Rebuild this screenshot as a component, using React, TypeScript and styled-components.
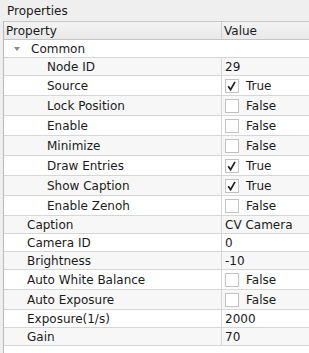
import React from "react";
import styled, { createGlobalStyle } from "styled-components";

const Global = createGlobalStyle`
  html, body { margin: 0; padding: 0; background: #efefef; }
  body { font-family: "DejaVu Sans", "Liberation Sans", sans-serif; font-size: 12px; color: #1a1a1a; }
`;

const Panel = styled.div`
  width: 309px;
  height: 353px;
  display: flex;
  flex-direction: column;
  overflow: hidden;
  background: #efefef;
`;

const TitleBar = styled.div`
  height: 21px;
  padding-left: 7px;
  display: flex;
  align-items: center;
  box-sizing: border-box;
  padding-top: 1px;
`;

const Frame = styled.div`
  flex: 1;
  margin-left: 3px;
  border-left: 1px solid #b9b9b9;
  border-top: 1px solid #c6c6c6;
  background: #ffffff;
  width: 340px;
  display: flex;
  flex-direction: column;
`;

const Header = styled.div`
  display: grid;
  grid-template-columns: 217px 1fr;
  height: 17px;
  border-bottom: 1px solid #c4c4c4;
  background: linear-gradient(#f3f3f3, #e9e9e9);
`;

const HeaderCell = styled.div<{ $divider?: boolean }>`
  display: flex;
  align-items: center;
  padding-left: ${(p) => (p.$divider ? "2px" : "2px")};
  border-left: ${(p) => (p.$divider ? "1px solid #cfcfcf" : "none")};
`;

const Row = styled.div<{ $alt: boolean; $tall: boolean }>`
  display: grid;
  grid-template-columns: 217px 1fr;
  height: ${(p) => (p.$tall ? 19 : 17)}px;
  border-bottom: 1px solid #d6d6d6;
  background: ${(p) => (p.$alt ? "#f7f7f7" : "#ffffff")};
`;

const GroupRow = styled.div`
  display: flex;
  align-items: center;
  height: 17px;
  border-bottom: 1px solid #d6d6d6;
  background: #ffffff;
`;

const Arrow = styled.span`
  width: 0;
  height: 0;
  margin-left: 10px;
  margin-right: 11px;
  border-left: 3.5px solid transparent;
  border-right: 3.5px solid transparent;
  border-top: 4px solid #8a8a8a;
  margin-top: 1px;
`;

const NameCell = styled.div<{ $level: number }>`
  display: flex;
  align-items: center;
  padding-left: ${(p) => 23 + p.$level * 20}px;
  white-space: nowrap;
`;

const ValueCell = styled.div`
  display: flex;
  align-items: center;
  border-left: 1px solid #d6d6d6;
  padding-left: 3px;
  white-space: nowrap;
`;

const Box = styled.span`
  width: 12px;
  height: 12px;
  border: 1px solid #c2c2c2;
  background: #ffffff;
  margin-right: 7px;
  display: inline-flex;
  align-items: center;
  justify-content: center;
  flex: none;
`;

const Check = () => (
  <svg width="12" height="12" viewBox="0 0 12 12">
    <path d="M2.2 6.2 L4.6 9.6 L9 1.8" fill="none" stroke="#202020" strokeWidth="1.7" strokeLinecap="butt" strokeLinejoin="miter" />
  </svg>
);

type Item = { name: string; level: number; value?: string; bool?: boolean };

const items: Item[] = [
  { name: "Node ID", level: 1, value: "29" },
  { name: "Source", level: 1, bool: true },
  { name: "Lock Position", level: 1, bool: false },
  { name: "Enable", level: 1, bool: false },
  { name: "Minimize", level: 1, bool: false },
  { name: "Draw Entries", level: 1, bool: true },
  { name: "Show Caption", level: 1, bool: true },
  { name: "Enable Zenoh", level: 1, bool: false },
  { name: "Caption", level: 0, value: "CV Camera" },
  { name: "Camera ID", level: 0, value: "0" },
  { name: "Brightness", level: 0, value: "-10" },
  { name: "Auto White Balance", level: 0, bool: false },
  { name: "Auto Exposure", level: 0, bool: false },
  { name: "Exposure(1/s)", level: 0, value: "2000" },
  { name: "Gain", level: 0, value: "70" },
];

export default function App() {
  return (
    <>
      <Global />
      <Panel>
        <TitleBar>Properties</TitleBar>
        <Frame>
          <Header>
            <HeaderCell>Property</HeaderCell>
            <HeaderCell $divider>Value</HeaderCell>
          </Header>
          <GroupRow>
            <Arrow />
            Common
          </GroupRow>
          {items.map((it, i) => (
            <Row key={it.name} $alt={i % 2 === 0} $tall={it.bool !== undefined}>
              <NameCell $level={it.level}>{it.name}</NameCell>
              <ValueCell>
                {it.bool !== undefined ? (
                  <>
                    <Box>{it.bool ? <Check /> : null}</Box>
                    {it.bool ? "True" : "False"}
                  </>
                ) : (
                  it.value
                )}
              </ValueCell>
            </Row>
          ))}
        </Frame>
      </Panel>
    </>
  );
}
